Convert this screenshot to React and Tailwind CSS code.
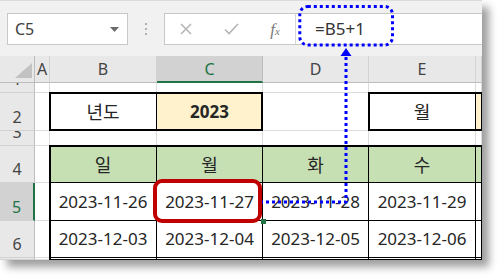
import React from "react";

const HDR = "bg-[#e8e8e8] flex items-center justify-center text-[16px] text-[#444] border-r border-b border-r-[#d2d2d2] border-b-[#bdbdbd]";
const RH = "bg-[#e8e8e8] flex items-end justify-center overflow-hidden text-[16px] text-[#444] border-r border-b border-r-[#bdbdbd] border-b-[#d2d2d2]";
const CELL = "bg-white flex items-center justify-center border-r border-b border-[#dcdcdc] text-[17px] text-[#262626] whitespace-nowrap overflow-hidden";
const TBL = "flex items-center justify-center border-r border-b border-black text-[17px] text-[#262626] whitespace-nowrap overflow-hidden";
const COLS = "grid-cols-[35px_15px_107px_106px_106px_107px_1fr]";

function RowNum({ n, sel }) {
  return (
    <div className={sel ? "bg-[#d2d2d2] flex items-end justify-center overflow-hidden text-[16px] text-[#217346] border-b border-r-2 border-b-[#d2d2d2] border-r-[#217346]" : RH}>
      <span className="leading-none pb-[5px]">{n}</span>
    </div>
  );
}

export default function App() {
  const row5 = ["2023-11-26", "2023-11-27", "2023-11-28", "2023-11-29"];
  const row6 = ["2023-12-03", "2023-12-04", "2023-12-05", "2023-12-06"];
  return (
    <div className="w-[500px] h-[277px] bg-white overflow-hidden font-['Noto_Sans','Noto_Sans_CJK_KR',sans-serif]">
      <div className="relative w-[482px] h-[260px] bg-[#f1f1f1] overflow-hidden shadow-[7px_7px_8px_rgba(0,0,0,0.38)] flex flex-col">
        {/* formula bar */}
        <div className="h-[56px] shrink-0 flex items-start pt-[12px] border-t border-[#dcdcdc]">
          <div className="ml-[7px] w-[121px] h-[32px] bg-white border border-[#c8c8c8] flex items-center justify-between pl-[7px] pr-[8px]">
            <span className="text-[16px] text-[#404040]">C5</span>
            <svg width="9" height="5" viewBox="0 0 9 5"><polygon points="0,0 9,0 4.5,5" fill="#6b6b6b" /></svg>
          </div>
          <div className="w-[36px] h-[32px] flex flex-col items-center justify-center gap-[3px]">
            <span className="w-[2px] h-[2px] bg-[#b0b0b0]" />
            <span className="w-[2px] h-[2px] bg-[#b0b0b0]" />
            <span className="w-[2px] h-[2px] bg-[#b0b0b0]" />
          </div>
          <div className="flex-1 h-[32px] bg-white border-y border-l border-[#c8c8c8] flex items-center">
            <div className="w-[42px] flex justify-center">
              <svg width="12" height="12" viewBox="0 0 12 12"><path d="M1 1 L11 11 M11 1 L1 11" stroke="#b4b4b4" strokeWidth="1.5" /></svg>
            </div>
            <div className="w-[48px] flex justify-center">
              <svg width="15" height="12" viewBox="0 0 15 12"><path d="M1 6.5 L5 10.5 L14 1" stroke="#b4b4b4" strokeWidth="1.6" fill="none" /></svg>
            </div>
            <div className="w-[40px] flex justify-center items-baseline text-[#7a7a7a] font-['Liberation_Serif',serif] italic">
              <span className="text-[17px] leading-none">f</span>
              <span className="text-[11px] leading-none">x</span>
            </div>
            <div className="w-px self-stretch bg-[#d6d6d6]" />
            <div className="pl-[19px] text-[17px] text-[#333]">=B5+1</div>
          </div>
        </div>

        {/* grid */}
        <div className="relative flex-1">
          <div className={`absolute inset-0 grid ${COLS} grid-rows-[27px_10px_38px_15px_37px_38px_37px_1fr]`}>
            {/* header row */}
            <div className="relative bg-[#e8e8e8] border-r border-b border-[#bdbdbd]">
              <svg className="absolute inset-0" width="35" height="27" viewBox="0 0 35 27">
                <polygon points="32,7 32,22 15,22" fill="#c2c2c2" />
              </svg>
            </div>
            <div className={HDR}>A</div>
            <div className={HDR}>B</div>
            <div className="bg-[#d2d2d2] flex items-center justify-center text-[16px] text-[#217346] border-r border-b-2 border-r-[#bdbdbd] border-b-[#217346]">C</div>
            <div className={HDR}>D</div>
            <div className={HDR}>E</div>
            <div className={HDR}></div>

            {/* row 1 */}
            <RowNum n="1" />
            <div className={CELL} />
            <div className={CELL} />
            <div className={CELL} />
            <div className={CELL} />
            <div className={CELL} />
            <div className={CELL} />

            {/* row 2 */}
            <RowNum n="2" />
            <div className={CELL} />
            <div className={`${TBL} bg-white text-[18px] font-['Noto_Sans_CJK_KR',sans-serif]`}>년도</div>
            <div className={`${TBL} bg-[#fff2cc] font-bold`}>2023</div>
            <div className={CELL} />
            <div className={`${TBL} bg-white text-[18px] font-['Noto_Sans_CJK_KR',sans-serif]`}>월</div>
            <div className={`${TBL} bg-[#fff2cc]`} />

            {/* row 3 */}
            <RowNum n="3" />
            <div className={CELL} />
            <div className={CELL} />
            <div className={CELL} />
            <div className={CELL} />
            <div className={CELL} />
            <div className={CELL} />

            {/* row 4 */}
            <RowNum n="4" />
            <div className={CELL} />
            {["일", "월", "화", "수"].map((d) => (
              <div key={d} className={`${TBL} bg-[#c6e0b4] text-[18px] font-['Noto_Sans_CJK_KR',sans-serif]`}>{d}</div>
            ))}
            <div className={`${TBL} bg-[#c6e0b4]`} />

            {/* row 5 */}
            <RowNum n="5" sel />
            <div className={CELL} />
            {row5.map((d) => (
              <div key={d} className={`${TBL} bg-white`}>{d}</div>
            ))}
            <div className={`${TBL} bg-white`} />

            {/* row 6 */}
            <RowNum n="6" />
            <div className={CELL} />
            {row6.map((d) => (
              <div key={d} className={`${TBL} bg-white`}>{d}</div>
            ))}
            <div className={`${TBL} bg-white`} />

            {/* row 7 (cut) */}
            <div className={RH} />
            <div className={CELL} />
            <div className={`${TBL} bg-white`} />
            <div className={`${TBL} bg-white`} />
            <div className={`${TBL} bg-white`} />
            <div className={`${TBL} bg-white`} />
            <div className={`${TBL} bg-white`} />
          </div>

          {/* thick range borders, on a matching overlay grid */}
          <div className={`absolute inset-0 grid ${COLS} grid-rows-[27px_10px_38px_15px_37px_38px_37px_1fr] pointer-events-none`}>
            <div className="col-start-3 col-end-5 row-start-3 row-end-4 -mt-px -ml-px border-2 border-black" />
            <div className="col-start-6 col-end-8 row-start-3 row-end-4 -mt-px -ml-px -mr-4 border-2 border-black" />
            <div className="col-start-3 col-end-8 row-start-5 row-end-9 -mt-px -ml-px -mr-4 -mb-4 border-2 border-black" />
          </div>
        </div>

        {/* annotations */}
        <div className="absolute left-[261px] top-[219px] w-[5px] h-[5px] bg-[#217346] z-20" />
        <svg className="absolute inset-0 pointer-events-none z-30" width="482" height="260" viewBox="0 0 482 260">
          <rect x="155" y="181" width="105" height="40" rx="7" fill="none" stroke="#c00000" strokeWidth="4" />
          <rect x="299.8" y="6.5" width="92.7" height="38.5" rx="8" fill="none" stroke="#0000ff" strokeWidth="3" strokeDasharray="3 3" />
          <polygon points="346,48 340.5,56 351.5,56" fill="#0000ff" />
          <path d="M346 57 V202 H262" fill="none" stroke="#0000ff" strokeWidth="3" strokeDasharray="3 3" />
        </svg>
      </div>
    </div>
  );
}
